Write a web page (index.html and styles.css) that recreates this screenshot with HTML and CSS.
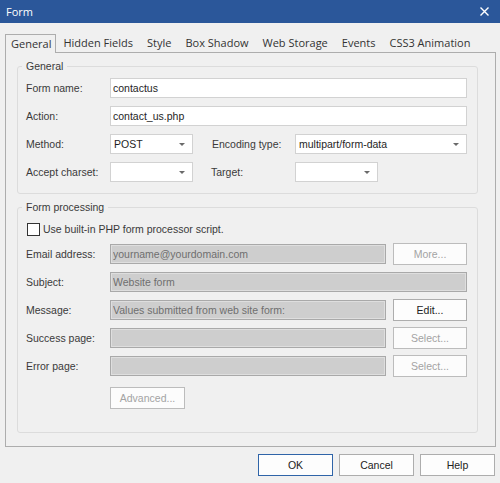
FILE: index.html
```html
<!DOCTYPE html>
<html>
	<head>
		<meta charset="UTF-8">
		<title>Form</title>
		<link rel="stylesheet" href="styles.css">
	</head>
	<body>
		<div class="dialog">
			<div class="titlebar">
				<span class="caption">Form</span>
				<svg class="close" width="9" height="9" viewBox="0 0 9 9">
					<path d="M0.5 0.5L8.5 8.5M8.5 0.5L0.5 8.5" stroke="#fff" stroke-width="1.4" fill="none"/>
				</svg>
			</div>

			<div class="tabs">
				<ul class="tab-strip">
					<li class="tab active">General</li>
					<li class="tab">Hidden Fields</li>
					<li class="tab">Style</li>
					<li class="tab">Box Shadow</li>
					<li class="tab">Web Storage</li>
					<li class="tab">Events</li>
					<li class="tab">CSS3 Animation</li>
				</ul>

				<div class="tab-panel">
					<!-- general settings -->
					<fieldset class="group group-general">
						<legend>General</legend>
						<div class="row">
							<label class="lbl">Form name:</label>
							<input class="field" type="text" value="contactus" />
						</div>
						<div class="row">
							<label class="lbl">Action:</label>
							<input class="field" type="text" value="contact_us.php" />
						</div>
						<div class="row">
							<label class="lbl">Method:</label>
							<div class="combo short"><span>POST</span><i class="arrow"></i></div>
							<label class="lbl lbl-mid">Encoding type:</label>
							<div class="combo wide"><span>multipart/form-data</span><i class="arrow"></i></div>
						</div>
						<div class="row">
							<label class="lbl">Accept charset:</label>
							<div class="combo short"><span></span><i class="arrow"></i></div>
							<label class="lbl lbl-target">Target:</label>
							<div class="combo short"><span></span><i class="arrow"></i></div>
						</div>
					</fieldset>

					<!-- form processing -->
					<fieldset class="group group-processing">
						<legend>Form processing</legend>
						<div class="check-row">
							<span class="checkbox"></span>
							<span>Use built-in PHP form processor script.</span>
						</div>
						<div class="prow">
							<label class="lbl">Email address:</label>
							<input class="field" type="text" value="yourname@yourdomain.com" disabled />
							<button class="btn" disabled>More...</button>
						</div>
						<div class="prow">
							<label class="lbl">Subject:</label>
							<input class="field" type="text" value="Website form" disabled />
						</div>
						<div class="prow">
							<label class="lbl">Message:</label>
							<input class="field" type="text" value="Values submitted from web site form:" disabled />
							<button class="btn">Edit...</button>
						</div>
						<div class="prow">
							<label class="lbl">Success page:</label>
							<input class="field" type="text" value="" disabled />
							<button class="btn" disabled>Select...</button>
						</div>
						<div class="prow">
							<label class="lbl">Error page:</label>
							<input class="field" type="text" value="" disabled />
							<button class="btn" disabled>Select...</button>
						</div>
						<div class="advanced-row">
							<button class="btn btn-advanced" disabled>Advanced...</button>
						</div>
					</fieldset>
				</div>
			</div>

			<div class="footer">
				<button class="btn btn-default">OK</button>
				<button class="btn">Cancel</button>
				<button class="btn">Help</button>
			</div>
		</div>
	</body>
</html>
```

FILE: styles.css
```css
/* dialog 500*483 */

body{margin:0; background:#f0f0f0; font:10.5px "Liberation Sans", Arial, sans-serif; color:#3a3a3a;}
ul{margin:0; padding:0; list-style:none;}
fieldset{margin:0; min-width:0;}
input, button{font:inherit; outline:none;}

.dialog{
	width:500px;
	height:483px;
	display:flex;
	flex-direction:column;
}

/* title bar */
.titlebar{
	display:flex;
	align-items:center;
	justify-content:space-between;
	height:23px;
	padding:0 11px 0 6px;
	background:#2b579a;
	color:#fff;
	font:11px "Open Sans", sans-serif;
}
.close{display:block;}

/* tabs */
.tabs{padding:11px 4px 0 5px;}
.tab-strip{
	display:flex;
	align-items:flex-start;
	font:11px "Open Sans", sans-serif;
	color:#333;
}
.tab{
	height:18px;
	line-height:18px;
	padding:0 7px;
	box-sizing:border-box;
}
.tab.active{
	position:relative;
	height:19px;
	margin-bottom:-1px;
	padding:0 4px 0 5px;
	border:1px solid #adadad;
	border-bottom:none;
	line-height:17px;
	background:#f0f0f0;
}
.tab-panel{
	border:1px solid #adadad;
	padding:6px 17px 13px 11px;
}

/* group boxes */
.group{
	border:1px solid #dcdcdc;
	border-radius:3px;
}
.group legend{
	padding:0 4px;
	margin-left:-4px;
	line-height:14px;
}
.group-general{padding:5px 10px 11px 8px;}
.group-processing{padding:8px 10px 23px 8px; margin-top:6px;}

.row{
	display:flex;
	align-items:center;
	height:20px;
}
.row + .row{margin-top:8px;}
.lbl{width:84px; flex:none;}
.lbl-mid{width:83px; margin-left:19px;}
.lbl-target{width:84px; margin-left:18px;}

.field{
	flex:1;
	min-width:0;
	height:20px;
	box-sizing:border-box;
	border:1px solid #d2d2d2;
	background:#fff;
	padding:0 2px;
	color:#1e1e1e;
}
.field:disabled{
	background:#cecece;
	border-color:#a9a9a9;
	box-shadow:inset 0 0 0 1px #dedede;
	color:#6e6e6e;
}

.combo{
	display:flex;
	align-items:center;
	justify-content:space-between;
	height:20px;
	box-sizing:border-box;
	border:1px solid #d2d2d2;
	background:#fff;
	padding:0 7px 0 3px;
	color:#1e1e1e;
}
.combo.short{width:83px; flex:none;}
.combo.wide{flex:1;}
.arrow{
	width:0;
	height:0;
	border-left:3px solid transparent;
	border-right:3px solid transparent;
	border-top:3px solid #6a6a6a;
}

.check-row{
	display:flex;
	align-items:center;
	height:14px;
	margin:0 0 7px 1px;
}
.checkbox{
	width:13px;
	height:13px;
	box-sizing:border-box;
	border:1px solid #333;
	background:#fff;
	margin-right:3px;
}

.prow{
	display:flex;
	align-items:center;
	height:22px;
}
.prow + .prow{margin-top:6px;}
.advanced-row{margin-top:10px; padding-left:84px;}

/* buttons */
.btn{
	width:74px;
	height:22px;
	flex:none;
	margin-left:7px;
	padding:0;
	border:1px solid #adadad;
	background:#fdfdfd;
	color:#222;
}
.btn:disabled{
	color:#a3a3a3;
	border-color:#bcbcbc;
	background:#fcfcfc;
}
.btn-advanced{width:75px; margin-left:0;}

.footer{
	display:flex;
	justify-content:flex-end;
	gap:6px;
	padding:7px 5px 0 0;
}
.footer .btn{width:75px; margin-left:0;}
.btn-default{border-color:#2f64a8;}
```
